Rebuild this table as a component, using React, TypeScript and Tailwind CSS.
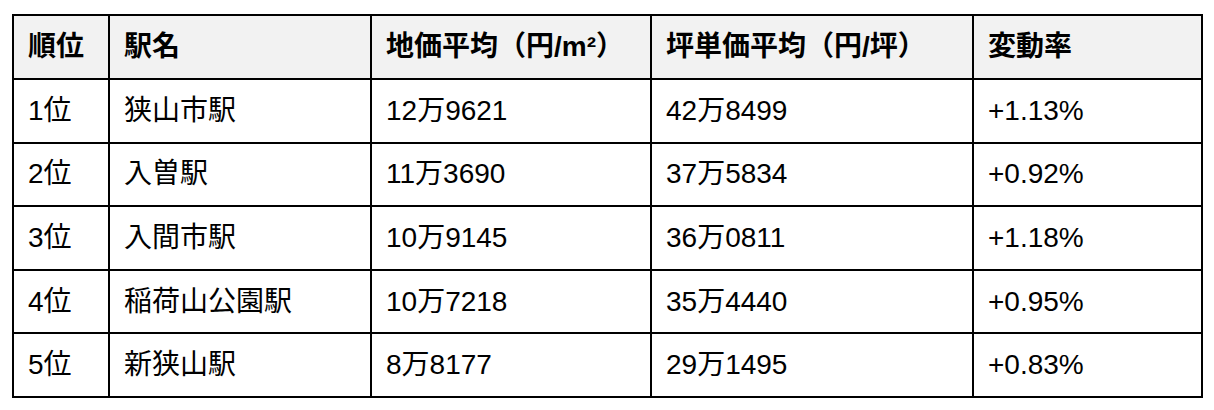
import React from "react";

const rows = [
  ["1位", "狭山市駅", "12万9621", "42万8499", "+1.13%"],
  ["2位", "入曽駅", "11万3690", "37万5834", "+0.92%"],
  ["3位", "入間市駅", "10万9145", "36万0811", "+1.18%"],
  ["4位", "稲荷山公園駅", "10万7218", "35万4440", "+0.95%"],
  ["5位", "新狭山駅", "8万8177", "29万1495", "+0.83%"],
];

export default function App() {
  return (
    <div
      className="w-[1214px] h-[410px] bg-white pt-[14px] pl-[12px]"
      style={{ fontFamily: '"Liberation Sans", "Noto Sans CJK JP", sans-serif' }}
    >
      <table className="table-fixed border-collapse w-[1189px] text-[28px] text-black">
        <colgroup>
          <col className="w-[96px]" />
          <col className="w-[262px]" />
          <col className="w-[280px]" />
          <col className="w-[322px]" />
          <col className="w-[229px]" />
        </colgroup>
        <thead>
          <tr className="h-[64px] bg-[#f2f2f2]">
            {["順位", "駅名", "地価平均（円/m²）", "坪単価平均（円/坪）", "変動率"].map((h) => (
              <th
                key={h}
                className="border-2 border-black px-[14px] text-left font-bold whitespace-nowrap leading-none"
              >
                {h}
              </th>
            ))}
          </tr>
        </thead>
        <tbody>
          {rows.map((r) => (
            <tr key={r[0]} className="h-[63.6px]">
              {r.map((c, i) => (
                <td
                  key={i}
                  className="border-2 border-black px-[14px] text-left whitespace-nowrap leading-none"
                >
                  {c}
                </td>
              ))}
            </tr>
          ))}
        </tbody>
      </table>
    </div>
  );
}
